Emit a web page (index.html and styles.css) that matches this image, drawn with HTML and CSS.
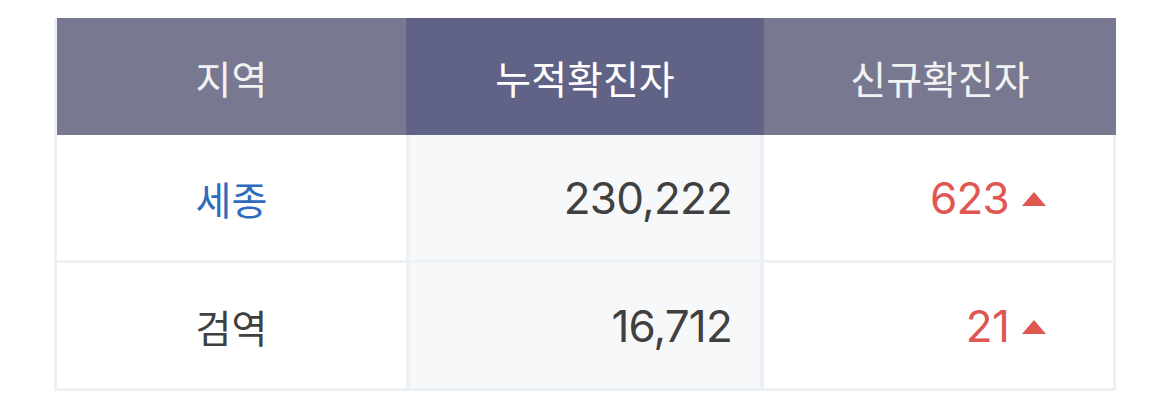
FILE: index.html
```html
<!DOCTYPE html>
<html lang="ko">
<head>
  <meta charset="UTF-8" />
  <meta name="viewport" content="width=device-width, initial-scale=1.0"/>
  <title>확진자 현황</title>
  <link rel="stylesheet" href="styles.css">
</head>
<body>

  <div class="stats">
    <div class="stats-head">
      <div class="cell">지역</div>
      <div class="cell cell-total">누적확진자</div>
      <div class="cell">신규확진자</div>
    </div>

    <div class="stats-row">
      <div class="cell region region-link">세종</div>
      <div class="cell cell-total num">230,222</div>
      <div class="cell cell-new num">623<span class="arrow-up"></span></div>
    </div>

    <div class="stats-row">
      <div class="cell region">검역</div>
      <div class="cell cell-total num">16,712</div>
      <div class="cell cell-new num">21<span class="arrow-up"></span></div>
    </div>
  </div>

</body>
</html>
```

FILE: styles.css
```css
body {
  margin: 0;
  padding: 18px 0 0 54px;
  font-family: 'Noto Sans CJK KR', 'Noto Sans', sans-serif;
  background-color: #fff;
  color: #404040;
}

.stats {
  width: 1062px;
  border-left: 3px solid #edf0f4;
  box-sizing: border-box;
}

.stats-head,
.stats-row {
  display: grid;
  grid-template-columns: 349px 358px 352px;
}

.stats-head {
  height: 117px;
  background-color: #787990;
  color: #f2f2f4;
  font-size: 39px;
}

.stats-head .cell-total {
  background-color: #616386;
  color: #fff;
}

.cell {
  display: flex;
  align-items: center;
  justify-content: center;
  box-sizing: border-box;
}

.stats-row {
  height: 128px;
  border-bottom: 3px solid #edf0f4;
  box-sizing: border-box;
}

.stats-row .cell-total {
  background-color: #f7f8fa;
  border-left: 4px solid #edf0f4;
  border-right: 4px solid #edf0f4;
  justify-content: flex-end;
  padding-right: 28px;
}

.region {
  font-size: 39px;
  color: #404040;
}

.region-link {
  color: #2f6bbd;
}

.num {
  font-family: Inter, 'Liberation Sans', sans-serif;
  font-size: 44px;
  letter-spacing: -0.8px;
  color: #404040;
}

.cell-new {
  justify-content: flex-end;
  padding-right: 67px;
  border-right: 3px solid #edf0f4;
  color: #e05751;
}

.arrow-up {
  width: 0;
  height: 0;
  margin: 3px 0 0 13px;
  border-left: 12px solid transparent;
  border-right: 12px solid transparent;
  border-bottom: 14px solid #e05751;
}
```
